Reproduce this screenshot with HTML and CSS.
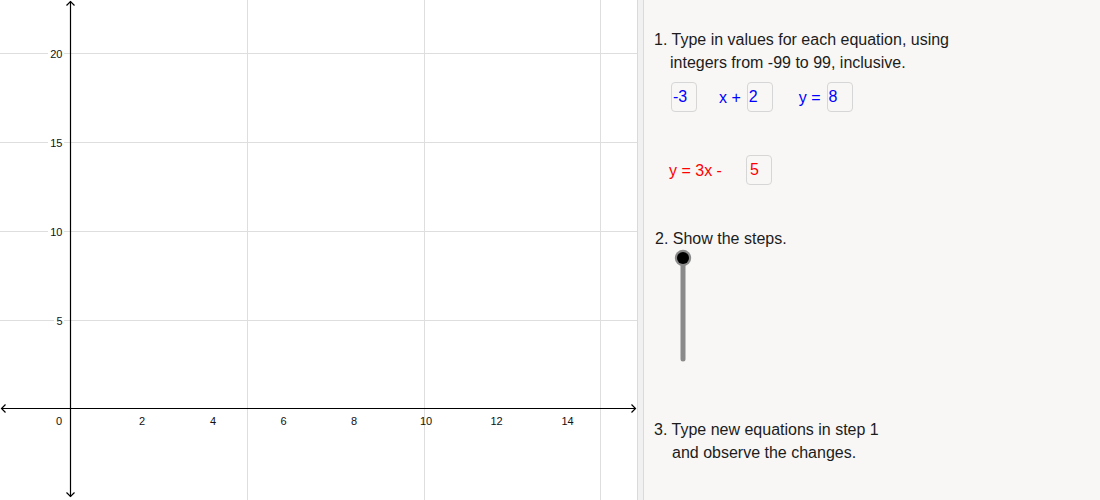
FILE: index.html
```html
<!DOCTYPE html>
<html lang="en">
<head>
<meta charset="utf-8">
<title>Equations</title>
<link rel="stylesheet" href="styles.css">
</head>
<body>
<div class="app">
  <div class="graphics">
    <svg class="plot" width="637" height="500" viewBox="0 0 637 500" xmlns="http://www.w3.org/2000/svg">
      <g class="grid">
        <line x1="247.5" y1="0" x2="247.5" y2="500"/>
        <line x1="424.5" y1="0" x2="424.5" y2="500"/>
        <line x1="600.5" y1="0" x2="600.5" y2="500"/>
        <line x1="0" y1="53.5" x2="637" y2="53.5"/>
        <line x1="0" y1="142.5" x2="637" y2="142.5"/>
        <line x1="0" y1="231.5" x2="637" y2="231.5"/>
        <line x1="0" y1="320.5" x2="637" y2="320.5"/>
      </g>
      <g class="ylabels">
        <rect x="48" y="47" width="16" height="13"/>
        <rect x="48" y="136" width="16" height="13"/>
        <rect x="48" y="225" width="16" height="13"/>
        <rect x="54" y="314" width="10" height="13"/>
      </g>
      <g class="labels" text-anchor="end">
        <text x="62.5" y="57.5">20</text>
        <text x="62.5" y="146.5">15</text>
        <text x="62.5" y="235.5">10</text>
        <text x="62.5" y="324.5">5</text>
      </g>
      <g class="labels" text-anchor="middle">
        <text x="59" y="425">0</text>
        <text x="142" y="425">2</text>
        <text x="213" y="425">4</text>
        <text x="283.5" y="425">6</text>
        <text x="354" y="425">8</text>
        <text x="426" y="425">10</text>
        <text x="496.5" y="425">12</text>
        <text x="567.5" y="425">14</text>
      </g>
      <g class="axes">
        <line x1="70.5" y1="1" x2="70.5" y2="497"/>
        <line x1="1" y1="408.5" x2="636" y2="408.5"/>
        <polyline points="66.5,5.5 70.5,1.5 74.5,5.5"/>
        <polyline points="66.5,492.5 70.5,496.5 74.5,492.5"/>
        <polyline points="5.5,404.5 1.5,408.5 5.5,412.5"/>
        <polyline points="631.5,404.5 635.5,408.5 631.5,412.5"/>
      </g>
    </svg>
  </div>
  <div class="divider"></div>
  <div class="panel">
    <p class="step step-1">1. Type in values for each equation, using integers from -99 to 99, inclusive.</p>
    <div class="eq-row eq-blue">
      <span class="box">-3</span>
      <span class="term term-x">x +</span>
      <span class="box">2</span>
      <span class="term term-y">y =</span>
      <span class="box">8</span>
    </div>
    <div class="eq-row eq-red">
      <span class="term term-red">y = 3x -</span>
      <span class="box box-red">5</span>
    </div>
    <p class="step step-2">2. Show the steps.</p>
    <svg class="slider" width="22" height="116" viewBox="0 0 22 116" xmlns="http://www.w3.org/2000/svg">
      <line x1="11" y1="9" x2="11" y2="110" class="track"/>
      <circle cx="11" cy="9" r="8.2" class="knob-ring"/>
      <circle cx="11" cy="9" r="6" class="knob"/>
    </svg>
    <p class="step step-3">3. Type new equations in step 1 and observe the changes.</p>
  </div>
</div>
</body>
</html>
```

FILE: styles.css
```css
html, body {
  margin: 0;
  padding: 0;
  width: 1100px;
  height: 500px;
  overflow: hidden;
  font-family: "Liberation Sans", Arial, sans-serif;
}

.app {
  display: flex;
  width: 1100px;
  height: 500px;
}

.graphics {
  width: 637px;
  height: 500px;
  background: #ffffff;
  flex: none;
}

.plot {
  display: block;
}

.grid line {
  stroke: #dedede;
  stroke-width: 1;
}

.ylabels rect {
  fill: #ffffff;
}

.labels text {
  font-family: "Liberation Sans", Arial, sans-serif;
  font-size: 11px;
  fill: #111111;
}

.axes line,
.axes polyline {
  stroke: #000000;
  stroke-width: 1.2;
  fill: none;
}

.divider {
  width: 5px;
  flex: none;
  background: #f1f1f1;
  border-left: 1px solid #dadada;
  border-right: 1px solid #dadada;
}

.panel {
  flex: 1;
  background: #f8f7f6;
  padding: 28px 0 0 10px;
  display: flex;
  flex-direction: column;
  align-items: flex-start;
  color: #1c1c1c;
  font-size: 16px;
  line-height: 23px;
}

.step {
  margin: 0;
}

.step-1 {
  width: 300px;
  padding-left: 16px;
  text-indent: -16px;
}

.step-2 {
  margin-top: 42px;
  margin-left: 1px;
}

.step-3 {
  margin-top: 53px;
  width: 212px;
  padding-left: 18px;
  text-indent: -18px;
}

.eq-row {
  display: flex;
  align-items: center;
  height: 30px;
}

.eq-blue {
  margin-top: 8px;
  margin-left: 17px;
  color: #0000ff;
}

.eq-red {
  margin-top: 43px;
  margin-left: 15px;
  color: #ff0000;
}

.box {
  box-sizing: border-box;
  width: 26px;
  height: 30px;
  border: 1.5px solid #d6d6d6;
  border-radius: 4px;
  padding-left: 1px;
  line-height: 27px;
}

.term-x {
  margin-left: 22px;
  margin-right: 6px;
}

.term-y {
  margin-left: 26px;
  margin-right: 6px;
}

.term-red {
  margin-right: 24px;
}

.box-red {
  padding-left: 3px;
}

.slider {
  display: block;
  margin-left: 18px;
  margin-top: -1px;
}

.track {
  stroke: #8a8a8a;
  stroke-width: 5;
  stroke-linecap: round;
}

.knob-ring {
  fill: #8a8a8a;
}

.knob {
  fill: #000000;
}
```
